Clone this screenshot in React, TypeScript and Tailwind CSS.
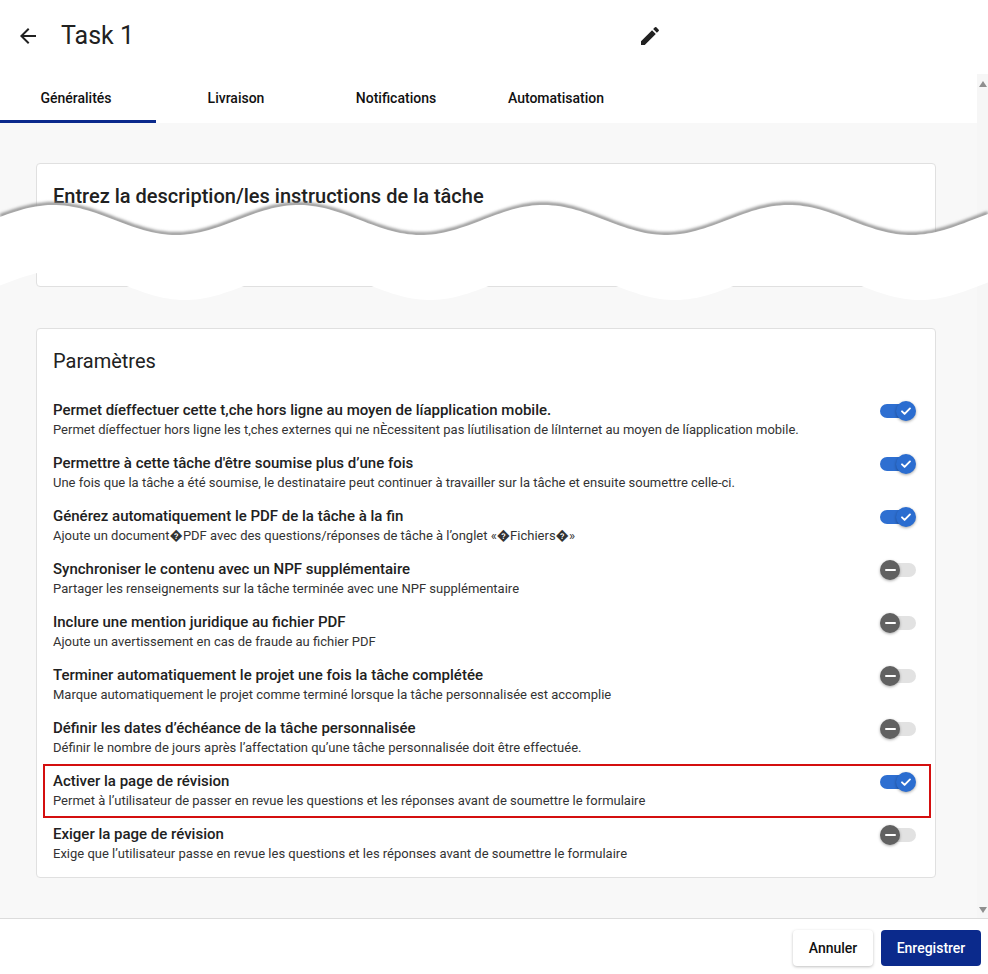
import React from 'react'

type Setting = {
  title: string
  description: string
  on: boolean
  highlighted?: boolean
}

const settings: Setting[] = [
  {
    title: 'Permet díeffectuer cette t,che hors ligne au moyen de líapplication mobile.',
    description:
      'Permet díeffectuer hors ligne les t,ches externes qui ne nÈcessitent pas líutilisation de líInternet au moyen de líapplication mobile.',
    on: true,
  },
  {
    title: "Permettre à cette tâche d'être soumise plus d’une fois",
    description:
      'Une fois que la tâche a été soumise, le destinataire peut continuer à travailler sur la tâche et ensuite soumettre celle-ci.',
    on: true,
  },
  {
    title: 'Générez automatiquement le PDF de la tâche à la fin',
    description: 'Ajoute un document�PDF avec des questions/réponses de tâche à l’onglet «�Fichiers�»',
    on: true,
  },
  {
    title: 'Synchroniser le contenu avec un NPF supplémentaire',
    description: 'Partager les renseignements sur la tâche terminée avec une NPF supplémentaire',
    on: false,
  },
  {
    title: 'Inclure une mention juridique au fichier PDF',
    description: 'Ajoute un avertissement en cas de fraude au fichier PDF',
    on: false,
  },
  {
    title: 'Terminer automatiquement le projet une fois la tâche complétée',
    description: 'Marque automatiquement le projet comme terminé lorsque la tâche personnalisée est accomplie',
    on: false,
  },
  {
    title: 'Définir les dates d’échéance de la tâche personnalisée',
    description: 'Définir le nombre de jours après l’affectation qu’une tâche personnalisée doit être effectuée.',
    on: false,
  },
  {
    title: 'Activer la page de révision',
    description:
      'Permet à l’utilisateur de passer en revue les questions et les réponses avant de soumettre le formulaire',
    on: true,
    highlighted: true,
  },
  {
    title: 'Exiger la page de révision',
    description:
      'Exige que l’utilisateur passe en revue les questions et les réponses avant de soumettre le formulaire',
    on: false,
  },
]

const tabs = ['Généralités', 'Livraison', 'Notifications', 'Automatisation']

function Toggle({ on }: { on: boolean }) {
  if (on) {
    return (
      <div className="relative h-5 w-9 shrink-0">
        <div className="absolute left-0 top-[3px] h-[14px] w-[30px] rounded-full bg-[#2e6fd1]" />
        <div className="absolute right-0 top-0 flex size-5 items-center justify-center rounded-full bg-[#2b6dd0] shadow-[0_1px_3px_rgba(0,0,0,0.35)]">
          <svg width="14" height="14" viewBox="0 0 14 14" fill="none">
            <path d="M3 7.3l2.6 2.6L11 4.4" stroke="white" strokeWidth="1.9" strokeLinecap="round" strokeLinejoin="round" />
          </svg>
        </div>
      </div>
    )
  }
  return (
    <div className="relative h-5 w-9 shrink-0">
      <div className="absolute right-0 top-[3px] h-[14px] w-[30px] rounded-full bg-[#e2e2e2]" />
      <div className="absolute left-0 top-0 flex size-5 items-center justify-center rounded-full bg-[#616161] shadow-[0_1px_3px_rgba(0,0,0,0.35)]">
        <div className="h-[2.5px] w-[11px] rounded-full bg-white" />
      </div>
    </div>
  )
}

function TornEdge() {
  const upper = (x: number) => 220 + 15 * Math.cos((2 * Math.PI * (x - 176)) / 245)
  const lower = (x: number) => 285 + 15 * Math.cos((2 * Math.PI * (x - 185)) / 245)
  const xs: number[] = []
  for (let x = 0; x <= 988; x += 4) xs.push(x)
  const top = xs.map((x) => `${x},${upper(x).toFixed(1)}`)
  const bottom = [...xs].reverse().map((x) => `${x},${lower(x).toFixed(1)}`)
  const fill = `M${top.join(' L')} L${bottom.join(' L')} Z`
  const edge = `M${top.join(' L')}`

  return (
    <svg
      className="pointer-events-none absolute left-0 top-0"
      width="988"
      height="320"
      viewBox="0 0 988 320"
    >
      <defs>
        <filter id="tornBlur" x="-5%" y="-50%" width="110%" height="200%">
          <feGaussianBlur stdDeviation="1.4" />
        </filter>
      </defs>
      <path d={edge} transform="translate(0,-1)" stroke="#8c8c8c" strokeWidth="3.5" fill="none" filter="url(#tornBlur)" />
      <path d={fill} fill="#ffffff" />
    </svg>
  )
}

export default function App() {
  return (
    <div className="relative flex h-[974px] w-[988px] flex-col overflow-hidden bg-white font-['Roboto',sans-serif] text-[#212121]">
      {/* header */}
      <div className="flex h-[74px] shrink-0 items-center pb-[3px] pl-4">
        <svg width="24" height="24" viewBox="0 0 24 24" fill="#212121">
          <path d="M20 11H7.83l5.59-5.59L12 4l-8 8 8 8 1.41-1.41L7.83 13H20v-2z" />
        </svg>
        <span className="ml-[21px] w-[577px] text-[25px] leading-8 text-[#212121]">Task 1</span>
        <svg width="24" height="24" viewBox="0 0 24 24" fill="#212121">
          <path d="M3 17.25V21h3.75L17.81 9.94l-3.75-3.75L3 17.25zM20.71 7.04c.39-.39.39-1.02 0-1.41l-2.34-2.34a.996.996 0 0 0-1.41 0l-1.83 1.83 3.75 3.75 1.83-1.83z" />
        </svg>
      </div>

      <div className="flex min-h-0 flex-1">
        <div className="flex min-w-0 flex-1 flex-col">
          {/* tabs */}
          <div className="flex h-[49px] shrink-0 bg-white">
            {tabs.map((t, i) => (
              <div key={t} className="flex w-[160px] flex-col">
                <div className="flex flex-1 items-center justify-center pr-2 pt-[2px] text-[14px] font-medium text-[#111]">{t}</div>
                <div className={`h-[3px] w-[156px] ${i === 0 ? 'bg-[#0b2a8c]' : ''}`} />
              </div>
            ))}
          </div>

          {/* content */}
          <div className="flex flex-1 flex-col gap-[41px] bg-[#f8f8f8] pl-9 pr-[41px] pt-[40px]">
            <div className="h-[124px] rounded border border-[#e0e0e0] bg-white px-4 pt-[18px]">
              <h2 className="text-[20px] font-medium leading-7 text-[#212121]">Entrez la description/les instructions de la tâche</h2>
            </div>

            <div className="rounded border border-[#e0e0e0] bg-white pb-[8px] pl-[8px] pr-[6px] pt-[18px]">
              <h2 className="px-2 text-[20px] leading-7 text-[#212121]">Paramètres</h2>
              <div className="mt-[20px] flex flex-col gap-[3px]">
                {settings.map((s) => (
                  <div
                    key={s.title}
                    className={`flex items-start justify-between pb-[6px] pl-2 pr-[13px] pt-[4px] ${
                      s.highlighted ? 'outline-2 outline-[#d40f0f]' : ''
                    }`}
                  >
                    <div>
                      <div className="text-[15px] font-medium leading-[22px] text-[#212121]">{s.title}</div>
                      <div className="text-[13px] leading-[18px] text-[#333]">{s.description}</div>
                    </div>
                    <div className="mt-[2px]">
                      <Toggle on={s.on} />
                    </div>
                  </div>
                ))}
              </div>
            </div>
          </div>
        </div>

        {/* scrollbar */}
        <div className="flex w-[11px] shrink-0 flex-col items-center justify-between bg-[#f6f6f6] pb-[5px] pt-[7px]">
          <div className="h-0 w-0 border-x-[4px] border-b-[6px] border-x-transparent border-b-[#8f8f8f]" />
          <div className="h-0 w-0 border-x-[4px] border-t-[6px] border-x-transparent border-t-[#8f8f8f]" />
        </div>
      </div>

      {/* footer */}
      <div className="flex h-[56px] shrink-0 items-start justify-end gap-2 border-t border-[#dcdcdc] bg-white pr-[7px] pt-[11px]">
        <button className="h-9 w-[80px] rounded bg-white text-[14px] font-medium text-[#111] shadow-[0_1px_3px_rgba(0,0,0,0.25)]">
          Annuler
        </button>
        <button className="h-9 w-[100px] rounded bg-[#0b2a8c] text-[14px] font-medium text-white">Enregistrer</button>
      </div>

      <TornEdge />
    </div>
  )
}
